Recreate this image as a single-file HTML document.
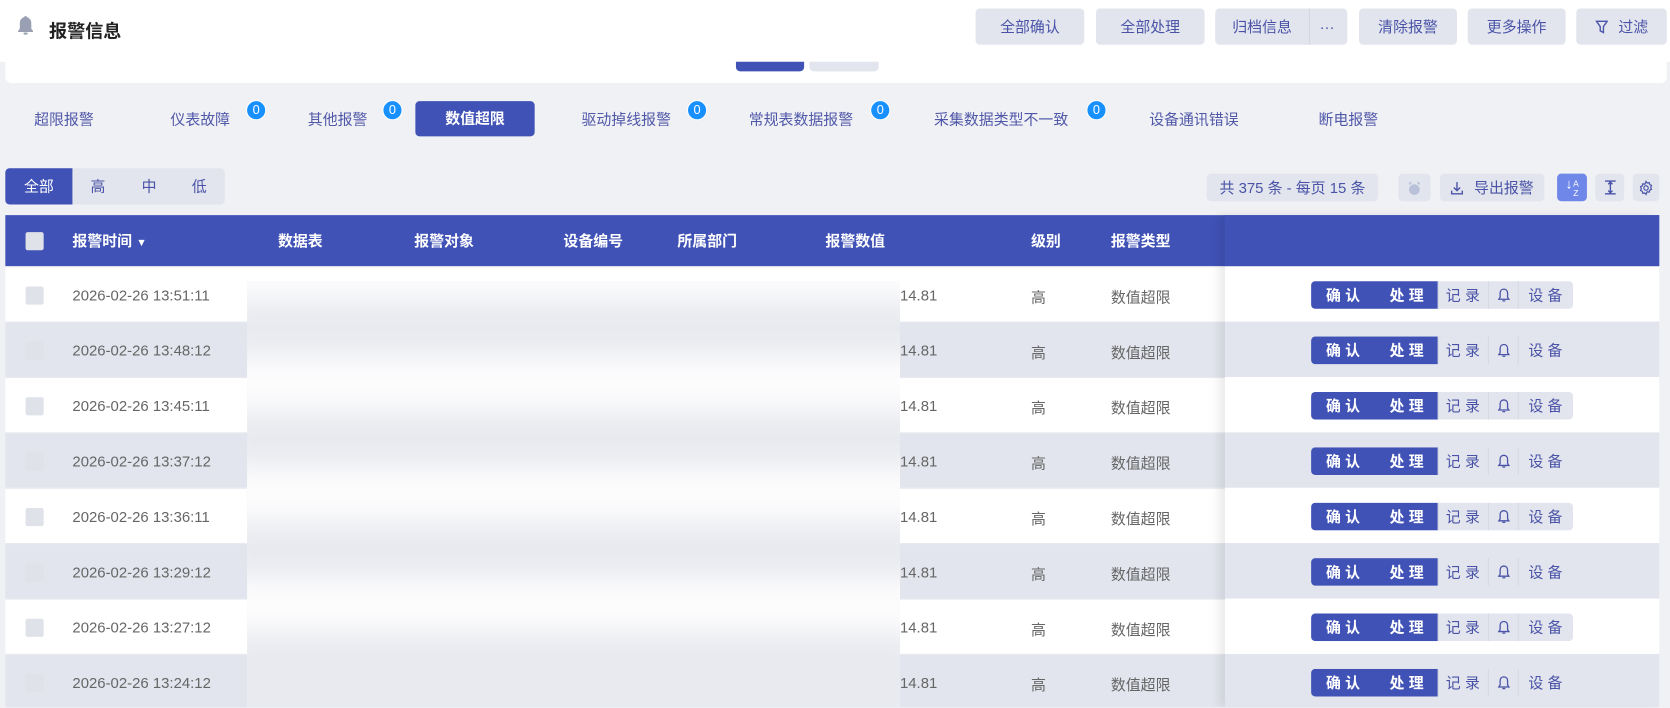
<!DOCTYPE html>
<html><head><meta charset="utf-8"><style>
*{box-sizing:border-box;margin:0;padding:0}
html,body{width:1670px;height:708px;overflow:hidden;background:#f0f1f5}
body{font-family:"Liberation Sans","Noto Sans CJK SC",sans-serif}
#w{position:absolute;left:0;top:0;width:1568px;height:664px;transform:scale(1.06505);transform-origin:0 0;background:#f0f1f5;overflow:hidden}
.a{position:absolute}
.btn{position:absolute;top:8px;height:34px;background:#e2e5ed;border-radius:4px;color:#4a53a8;font-size:14px;line-height:34px;text-align:center}
.tab{position:absolute;top:101px;font-size:14px;color:#5058a8;line-height:22px}
.bd{position:absolute;top:94px;width:19px;height:19px;border-radius:50%;background:#1890ff;color:#fff;font-size:12px;line-height:17px;text-align:center;border:1px solid #fff}
.th{position:absolute;top:216px;color:#fff;font-size:14px;font-weight:bold}
.row{position:absolute;left:5px;width:1553px;height:52px;border-top:1px solid #e8eaf0}
.cb{position:absolute;left:19px;top:18px;width:17px;height:17px;border-radius:2px;background:#dfe2e8}
.t{position:absolute;top:18px;font-size:14px;color:#666}
.act{position:absolute;left:1231px;top:14px;height:26px;display:flex;font-size:14px;line-height:26px;border-radius:4px;overflow:hidden;letter-spacing:4px}
.act .b{background:#4052b6;color:#fff;font-weight:bold;width:119px;padding-left:14px;white-space:nowrap}
.act .g{background:#e2e5ed;color:#4a53a8;border-left:1px solid #d5d8e2;text-align:center}
.tb{position:absolute;top:163px;height:26px;background:#e2e5ed;border-radius:4px;color:#4a53a8;font-size:14px;line-height:26px;text-align:center}
</style></head><body><div id="w">
<div class="a" style="left:0;top:0;width:1568px;height:58px;background:#fff"></div>
<div class="a" style="left:5px;top:50px;width:1560px;height:28px;background:#fff;border-radius:0 0 6px 6px"></div>
<div class="a" style="left:691px;top:58px;width:64px;height:9px;background:#4052b6;border-radius:0 0 4px 4px"></div>
<div class="a" style="left:760px;top:58px;width:65px;height:9px;background:#e2e5ed;border-radius:0 0 4px 4px"></div>
<svg class="a" style="left:15px;top:14px" width="18" height="20" viewBox="0 0 18 20"><path d="M9 1c-.8 0-1.2.5-1.2 1.1C5 2.8 3.6 5 3.6 8v5L2 15v1h14v-1l-1.6-2V8c0-3-1.4-5.2-4.2-5.9C10.2 1.5 9.8 1 9 1z" fill="#9aa0b4"/><rect x="7" y="16.5" width="4" height="2" rx="1" fill="#9aa0b4"/></svg>
<div class="a" style="left:46px;top:15px;font-size:17px;font-weight:bold;color:#222">报警信息</div>
<div class="btn" style="left:916px;width:102px">全部确认</div>
<div class="btn" style="left:1029px;width:102px">全部处理</div>
<div class="btn" style="left:1141px;width:124px;text-align:left;padding-left:16px">归档信息<span style="position:absolute;left:88px;top:0;width:1px;height:34px;background:#d5d8e2"></span><span style="position:absolute;left:98px">···</span></div>
<div class="btn" style="left:1276px;width:92px">清除报警</div>
<div class="btn" style="left:1378px;width:92px">更多操作</div>
<div class="btn" style="left:1480px;width:85px"><svg style="vertical-align:-2px;margin-right:10px" width="12" height="13" viewBox="0 0 12 13"><path d="M1 1h10L7.5 6v5.5l-3-1.5V6z" fill="none" stroke="#4a53a8" stroke-width="1.3"/></svg>过滤</div>
<div class="tab" style="left:32px">超限报警</div>
<div class="tab" style="left:160px">仪表故障</div><div class="bd" style="left:231px">0</div>
<div class="tab" style="left:289px">其他报警</div><div class="bd" style="left:359px">0</div>
<div class="a" style="left:390px;top:95px;width:112px;height:33px;background:#4052b6;border-radius:4px;color:#fff;font-size:14px;font-weight:bold;line-height:33px;text-align:center">数值超限</div>
<div class="tab" style="left:546px">驱动掉线报警</div><div class="bd" style="left:645px">0</div>
<div class="tab" style="left:703px">常规表数据报警</div><div class="bd" style="left:817px">0</div>
<div class="tab" style="left:877px">采集数据类型不一致</div><div class="bd" style="left:1020px">0</div>
<div class="tab" style="left:1079px">设备通讯错误</div>
<div class="tab" style="left:1238px">断电报警</div>
<div class="a" style="left:5px;top:158px;width:206px;height:34px;background:#e2e5ed;border-radius:4px;font-size:14px;color:#4a53a8;line-height:34px">
<div class="a" style="left:0;top:0;width:63px;height:34px;background:#4052b6;color:#fff;text-align:center;border-radius:4px 0 0 4px">全部</div>
<span class="a" style="left:80px">高</span><span class="a" style="left:128px">中</span><span class="a" style="left:175px">低</span></div>
<div class="tb" style="left:1133px;width:161px">共 375 条 - 每页 15 条</div>
<div class="tb" style="left:1313px;width:30px"><svg style="vertical-align:-3px" width="14" height="14" viewBox="0 0 14 14"><circle cx="7" cy="8" r="5" fill="#b8c0da"/><path d="M2 3l2-2M12 3l-2-2" stroke="#b8c0da" stroke-width="1.5"/></svg></div>
<div class="tb" style="left:1352px;width:98px"><svg style="vertical-align:-2px;margin-right:10px" width="12" height="13" viewBox="0 0 12 13"><path d="M6 1v8M3 6l3 3 3-3M1 9v3h10V9" fill="none" stroke="#4a53a8" stroke-width="1.3"/></svg>导出报警</div>
<div class="tb" style="left:1462px;width:28px;background:#6f87e8;color:#fff;font-size:8px;line-height:9px;padding-top:4px"><span style="position:absolute;left:8px;top:5px;font-size:13px">↓</span><span style="position:absolute;left:15px;top:5px">A<br>Z</span></div>
<div class="tb" style="left:1498px;width:27px"><svg style="vertical-align:-2px" width="12" height="14" viewBox="0 0 12 14"><path d="M1 1h10M1 13h10M6 2v10M4 4l2-2 2 2M4 10l2 2 2-2" fill="none" stroke="#4a53a8" stroke-width="1.3"/></svg></div>
<div class="tb" style="left:1533px;width:25px"><svg style="vertical-align:-3px" width="15" height="15" viewBox="0 0 16 16"><path d="M8 1.5l1.2 1.6 2-.5.5 2 1.8.9-.8 1.9.8 1.9-1.8.9-.5 2-2-.5L8 14.5l-1.2-1.6-2 .5-.5-2-1.8-.9.8-1.9-.8-1.9 1.8-.9.5-2 2 .5z" fill="none" stroke="#4a53a8" stroke-width="1.2"/><circle cx="8" cy="8" r="2.2" fill="none" stroke="#4a53a8" stroke-width="1.2"/></svg></div>
<div class="a" style="left:5px;top:202px;width:1553px;height:48px;background:#4052b6"></div>
<div class="a" style="left:24px;top:218px;width:17px;height:17px;background:#dfe2e8;border-radius:2px"></div>
<div class="th" style="left:68px">报警时间 <span style="font-size:10px">▼</span></div>
<div class="th" style="left:261px">数据表</div>
<div class="th" style="left:389px">报警对象</div>
<div class="th" style="left:529px">设备编号</div>
<div class="th" style="left:636px">所属部门</div>
<div class="th" style="left:775px">报警数值</div>
<div class="th" style="left:968px">级别</div>
<div class="th" style="left:1043px">报警类型</div>
<div class="row" style="top:250px;background:#fff"><div class="cb"></div><div class="t" style="left:63px">2026-02-26 13:51:11</div><div class="t" style="left:840px">14.81</div><div class="t" style="left:963px">高</div><div class="t" style="left:1038px">数值超限</div></div>
<div class="row" style="top:302px;background:#e2e5ed"><div class="cb"></div><div class="t" style="left:63px">2026-02-26 13:48:12</div><div class="t" style="left:840px">14.81</div><div class="t" style="left:963px">高</div><div class="t" style="left:1038px">数值超限</div></div>
<div class="row" style="top:354px;background:#fff"><div class="cb"></div><div class="t" style="left:63px">2026-02-26 13:45:11</div><div class="t" style="left:840px">14.81</div><div class="t" style="left:963px">高</div><div class="t" style="left:1038px">数值超限</div></div>
<div class="row" style="top:406px;background:#e2e5ed"><div class="cb"></div><div class="t" style="left:63px">2026-02-26 13:37:12</div><div class="t" style="left:840px">14.81</div><div class="t" style="left:963px">高</div><div class="t" style="left:1038px">数值超限</div></div>
<div class="row" style="top:458px;background:#fff"><div class="cb"></div><div class="t" style="left:63px">2026-02-26 13:36:11</div><div class="t" style="left:840px">14.81</div><div class="t" style="left:963px">高</div><div class="t" style="left:1038px">数值超限</div></div>
<div class="row" style="top:510px;background:#e2e5ed"><div class="cb"></div><div class="t" style="left:63px">2026-02-26 13:29:12</div><div class="t" style="left:840px">14.81</div><div class="t" style="left:963px">高</div><div class="t" style="left:1038px">数值超限</div></div>
<div class="row" style="top:562px;background:#fff"><div class="cb"></div><div class="t" style="left:63px">2026-02-26 13:27:12</div><div class="t" style="left:840px">14.81</div><div class="t" style="left:963px">高</div><div class="t" style="left:1038px">数值超限</div></div>
<div class="row" style="top:614px;background:#e2e5ed"><div class="cb"></div><div class="t" style="left:63px">2026-02-26 13:24:12</div><div class="t" style="left:840px">14.81</div><div class="t" style="left:963px">高</div><div class="t" style="left:1038px">数值超限</div></div>
<div class="a" style="left:232px;top:264px;width:613px;height:400px;overflow:hidden;background:#f0f1f4">
<div class="a" style="left:-20px;top:-20px;width:653px;height:440px;filter:blur(12px);background:linear-gradient(180deg,#fcfcfd 0,#fcfcfd 38px,#e8eaef 38px,#e8eaef 90px,#fcfcfd 90px,#fcfcfd 142px,#e8eaef 142px,#e8eaef 194px,#fcfcfd 194px,#fcfcfd 246px,#e8eaef 246px,#e8eaef 298px,#fcfcfd 298px,#fcfcfd 350px,#e8eaef 350px,#e8eaef 440px)"></div></div>
<div class="a" style="left:1150px;top:202px;width:408px;height:462px;box-shadow:-6px 0 8px rgba(0,0,0,.08)">
<div class="a" style="left:0;top:0;width:408px;height:48px;background:#4052b6"></div>
</div>
<div class="a" style="left:1150px;top:250px;width:408px;height:414px;overflow:hidden">
<div class="a" style="left:0;top:0;width:408px;height:52px;background:#fff"></div>
<div class="a" style="left:0;top:52px;width:408px;height:52px;background:#e2e5ed"></div>
<div class="a" style="left:0;top:104px;width:408px;height:52px;background:#fff"></div>
<div class="a" style="left:0;top:156px;width:408px;height:52px;background:#e2e5ed"></div>
<div class="a" style="left:0;top:208px;width:408px;height:52px;background:#fff"></div>
<div class="a" style="left:0;top:260px;width:408px;height:52px;background:#e2e5ed"></div>
<div class="a" style="left:0;top:312px;width:408px;height:52px;background:#fff"></div>
<div class="a" style="left:0;top:364px;width:408px;height:52px;background:#e2e5ed"></div>
</div>
<div class="a" style="left:1558px;top:202px;width:10px;height:462px;background:#f0f1f5"></div>
</div>
<script>
var w=document.getElementById('w');
var bell='<svg width="12" height="14" viewBox="0 0 12 14" style="vertical-align:-2px"><path d="M6 1.5c-2.2 0-3.5 1.6-3.5 3.8v3.9L1.3 11h9.4L9.5 9.2V5.3C9.5 3.1 8.2 1.5 6 1.5zM4.6 12.5h2.8" fill="none" stroke="#4a53a8" stroke-width="1.2"/></svg>';
for(var i=0;i<8;i++){var d=document.createElement('div');d.className='act';d.style.top=(264+i*52)+'px';
d.innerHTML='<div class="b">确认 &nbsp; 处理</div><div class="g" style="width:47px;padding-left:3px">记录</div><div class="g" style="width:28px;letter-spacing:0">'+bell+'</div><div class="g" style="width:52px;padding-left:3px">设备</div>';w.appendChild(d);}
</script>
</body></html>
